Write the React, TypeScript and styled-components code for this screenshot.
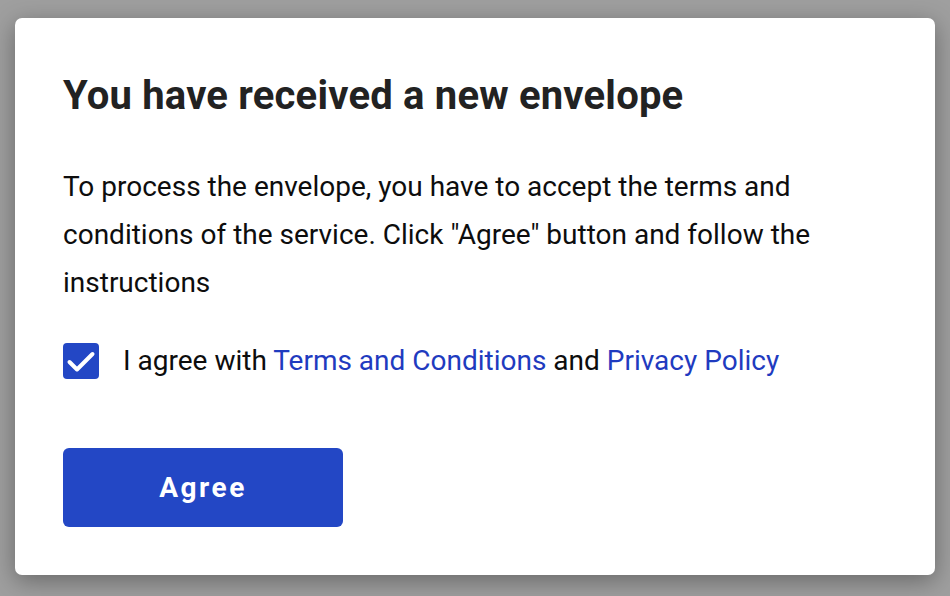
import React, { useState } from 'react';
import styled, { createGlobalStyle } from 'styled-components';

const GlobalStyle = createGlobalStyle`
  html, body {
    margin: 0;
    padding: 0;
    background: #9f9f9f;
    font-family: Roboto, 'Liberation Sans', sans-serif;
  }
`;

const Backdrop = styled.div`
  width: 950px;
  height: 596px;
  box-sizing: border-box;
  padding: 18px 15px 21px 15px;
  background: #9f9f9f;
  overflow: hidden;
`;

const Dialog = styled.div`
  height: 100%;
  box-sizing: border-box;
  background: #fff;
  border-radius: 7px;
  box-shadow: 0 6px 24px rgba(0, 0, 0, 0.35);
  padding: 54px 48px 48px 48px;
  display: flex;
  flex-direction: column;
  align-items: flex-start;
`;

const Title = styled.h1`
  margin: 0;
  font-size: 40px;
  font-weight: 700;
  letter-spacing: 0.2px;
  color: #222;
  line-height: 48px;
`;

const Body = styled.p`
  margin: 43px 0 0 0;
  font-size: 28px;
  line-height: 48px;
  color: #0d0d0d;
`;

const CheckRow = styled.label`
  display: flex;
  align-items: center;
  gap: 24px;
  margin-top: 36px;
  font-size: 28px;
  line-height: 36px;
  color: #0d0d0d;
  cursor: pointer;
`;

const Box = styled.span<{ $checked: boolean }>`
  width: 36px;
  height: 36px;
  border-radius: 4px;
  flex-shrink: 0;
  box-sizing: border-box;
  background: ${({ $checked }) => ($checked ? '#2347c5' : '#fff')};
  border: ${({ $checked }) => ($checked ? 'none' : '2px solid #2347c5')};
  display: flex;
`;

const Link = styled.a`
  color: #1f3bbf;
  text-decoration: none;
`;

const AgreeButton = styled.button`
  margin-top: 69px;
  width: 280px;
  height: 80px;
  border: none;
  border-radius: 6px;
  background: #2347c5;
  color: #fff;
  font-family: Roboto, 'Liberation Sans', sans-serif;
  font-size: 28px;
  font-weight: 700;
  letter-spacing: 2.5px;
  cursor: pointer;
`;

export default function App() {
  const [checked, setChecked] = useState(true);
  return (
    <>
      <GlobalStyle />
      <Backdrop>
        <Dialog>
          <Title>You have received a new envelope</Title>
          <Body>
            To process the envelope, you have to accept the terms and conditions of the service. Click "Agree" button and follow the instructions
          </Body>
          <CheckRow onClick={() => setChecked(!checked)}>
            <Box $checked={checked}>
              {checked && (
                <svg width="36" height="36" viewBox="0 0 36 36" fill="none" stroke="#fff" strokeWidth="4" strokeLinecap="round" strokeLinejoin="round">
                  <polyline points="6.5,19 14,26.5 29.5,11" />
                </svg>
              )}
            </Box>
            <span>
              I agree with <Link href="#">Terms and Conditions</Link> and <Link href="#">Privacy Policy</Link>
            </span>
          </CheckRow>
          <AgreeButton>Agree</AgreeButton>
        </Dialog>
      </Backdrop>
    </>
  );
}
